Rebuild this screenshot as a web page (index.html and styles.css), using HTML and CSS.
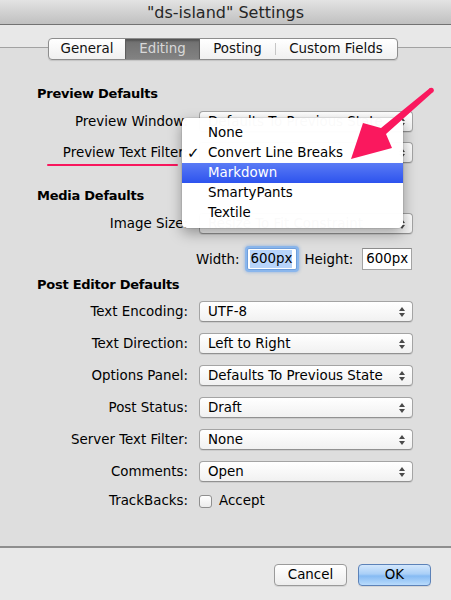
FILE: index.html
```html
<!DOCTYPE html>
<html>
<head>
<meta charset="utf-8">
<link rel="stylesheet" href="styles.css">
</head>
<body>
<div class="window">
  <header class="titlebar">"ds-island" Settings</header>
  <div class="toolbar"></div>
  <section class="tabbox">
    <nav class="tabs">
      <span class="tab">General</span>
      <span class="tab selected">Editing</span>
      <span class="tab">Posting</span>
      <span class="tab sep">Custom Fields</span>
    </nav>
    <div class="form">
      <h2 class="heading">Preview Defaults</h2>
      <div class="row mt9"><span class="label">Preview Window:</span><div class="popup"><span>Defaults To Previous State</span><svg class="updown" width="6" height="10" viewBox="0 0 6 10"><polygon points="0,4 3,0 6,4"/><polygon points="0,6 3,10 6,6"/></svg></div></div>
      <div class="row mt10"><span class="label">Preview Text Filter:</span><div class="popup"><span>Convert Line Breaks</span><svg class="updown" width="6" height="10" viewBox="0 0 6 10"><polygon points="0,4 3,0 6,4"/><polygon points="0,6 3,10 6,6"/></svg></div></div>

      <h2 class="heading mt25">Media Defaults</h2>
      <div class="row mt9"><span class="label">Image Size:</span><div class="popup"><span>Resize To Fit Constraint</span><svg class="updown" width="6" height="10" viewBox="0 0 6 10"><polygon points="0,4 3,0 6,4"/><polygon points="0,6 3,10 6,6"/></svg></div></div>
      <div class="size-row">
        <span class="size-label">Width:</span>
        <span class="field focus"><span class="sel">600px</span></span>
        <span class="size-label h">Height:</span>
        <span class="field">600px</span>
      </div>

      <h2 class="heading mt7">Post Editor Defaults</h2>
      <div class="row mt8"><span class="label">Text Encoding:</span><div class="popup"><span>UTF-8</span><svg class="updown" width="6" height="10" viewBox="0 0 6 10"><polygon points="0,4 3,0 6,4"/><polygon points="0,6 3,10 6,6"/></svg></div></div>
      <div class="row mt11"><span class="label">Text Direction:</span><div class="popup"><span>Left to Right</span><svg class="updown" width="6" height="10" viewBox="0 0 6 10"><polygon points="0,4 3,0 6,4"/><polygon points="0,6 3,10 6,6"/></svg></div></div>
      <div class="row mt11"><span class="label">Options Panel:</span><div class="popup"><span>Defaults To Previous State</span><svg class="updown" width="6" height="10" viewBox="0 0 6 10"><polygon points="0,4 3,0 6,4"/><polygon points="0,6 3,10 6,6"/></svg></div></div>
      <div class="row mt11"><span class="label">Post Status:</span><div class="popup"><span>Draft</span><svg class="updown" width="6" height="10" viewBox="0 0 6 10"><polygon points="0,4 3,0 6,4"/><polygon points="0,6 3,10 6,6"/></svg></div></div>
      <div class="row mt11"><span class="label">Server Text Filter:</span><div class="popup"><span>None</span><svg class="updown" width="6" height="10" viewBox="0 0 6 10"><polygon points="0,4 3,0 6,4"/><polygon points="0,6 3,10 6,6"/></svg></div></div>
      <div class="row mt11"><span class="label">Comments:</span><div class="popup"><span>Open</span><svg class="updown" width="6" height="10" viewBox="0 0 6 10"><polygon points="0,4 3,0 6,4"/><polygon points="0,6 3,10 6,6"/></svg></div></div>
      <div class="row check-row mt11"><span class="label">TrackBacks:</span><div class="check"><span class="box"></span><span>Accept</span></div></div>
    </div>
  </section>
  <footer class="buttons">
    <span class="btn">Cancel</span>
    <span class="btn default">OK</span>
  </footer>

  <div class="underline"></div>
  <ul class="menu">
    <li>None</li>
    <li class="checked"><span class="mark">✓</span>Convert Line Breaks</li>
    <li class="hl">Markdown</li>
    <li>SmartyPants</li>
    <li>Textile</li>
  </ul>
  <svg class="arrow" width="95" height="82" viewBox="345 82 95 82">
    <polygon points="351,159 392,148 386,134 432.5,92.5 430,88 381,128 363,123"/>
    <circle cx="431.3" cy="90.2" r="2.5"/>
  </svg>
</div>
</body>
</html>
```
FILE: styles.css
```css
html, body {
  margin: 0;
  padding: 0;
}
body {
  width: 451px;
  height: 600px;
  overflow: hidden;
  font-family: "DejaVu Sans", sans-serif;
  font-size: 13.4px;
  color: #000;
  background: #e8e8e8;
}
.window {
  position: relative;
  height: 600px;
  display: flex;
  flex-direction: column;
}
.titlebar {
  height: 23px;
  padding-top: 1px;
  line-height: 23px;
  text-align: center;
  font-size: 16px;
  color: #262626;
  background: linear-gradient(#e3e3e3, #c0c0c0);
  border-bottom: 1px solid #727272;
}
.toolbar {
  height: 22px;
  background: #e8e8e8;
}
.tabbox {
  flex: 1;
  background: #dedede;
  border-top: 1px solid #a2a2a2;
  border-bottom: 2px solid #8e8e8e;
}
.tabs {
  display: grid;
  grid-template-columns: 76px 75px 75px 122px;
  width: max-content;
  height: 22px;
  box-sizing: border-box;
  margin: -10px 0 0 48px;
  border: 1px solid #8d8d8d;
  border-radius: 4px;
  background: linear-gradient(#ffffff, #f0f0f0);
  box-shadow: 0 1px 1px rgba(0, 0, 0, 0.12);
  overflow: hidden;
}
.tab {
  position: relative;
  text-align: center;
  line-height: 20px;
  color: #111;
}
.tab.selected {
  background: linear-gradient(#6f6f6f, #828282);
  color: #d8d8d8;
  box-shadow: inset 1px 0 0 #5e5e5e, inset -1px 0 0 #5e5e5e, inset 0 2px 2px rgba(0,0,0,0.25);
}
.tab.sep::before {
  content: "";
  position: absolute;
  left: 0;
  top: 4px;
  bottom: 4px;
  width: 1px;
  background: #c6c6c6;
}
.form {
  padding-top: 26px;
  display: flex;
  flex-direction: column;
}
.heading {
  margin: 0 0 0 37px;
  font-size: 13px;
  font-weight: bold;
  letter-spacing: -0.25px;
  line-height: 16px;
}
.mt7 { margin-top: 7px; }
.mt8 { margin-top: 8px; }
.mt9 { margin-top: 9px; }
.mt10 { margin-top: 10px; }
.mt11 { margin-top: 11px; }
.mt25 { margin-top: 25px; }
.row {
  display: grid;
  grid-template-columns: 188px 214px;
  column-gap: 11px;
  align-items: center;
  height: 21px;
}
.label {
  text-align: right;
  line-height: 16px;
  white-space: nowrap;
}
.popup {
  height: 21px;
  box-sizing: border-box;
  border: 1px solid #a4a4a4;
  border-bottom-color: #919191;
  border-radius: 4px;
  background: linear-gradient(#ffffff, #f1f1f1);
  box-shadow: 0 1px 0 rgba(0, 0, 0, 0.08);
  display: flex;
  align-items: center;
  justify-content: space-between;
  padding: 0 7px 0 8px;
  line-height: 19px;
  white-space: nowrap;
}
.updown {
  fill: #4a4a4a;
  flex: none;
}
.size-row {
  display: flex;
  align-items: center;
  height: 22px;
  margin-top: 14px;
  padding-left: 196px;
}
.size-label {
  margin-right: 8px;
}
.size-label.h {
  margin-left: 7px;
  margin-right: 9px;
}
.field {
  width: 50px;
  height: 22px;
  box-sizing: border-box;
  border: 1px solid #a3a3a3;
  border-top-color: #8c8c8c;
  background: #fff;
  padding: 0 3px;
  line-height: 20px;
  white-space: nowrap;
}
.field.focus {
  border-color: #6f9fdc;
  border-radius: 2px;
  box-shadow: 0 0 0 2px #8ab6ec, 0 0 3px 3px rgba(110, 160, 225, 0.45);
  padding: 0 2px;
}
.sel {
  background: #b7d4fa;
  display: inline-block;
  line-height: 18px;
  margin-top: 1px;
}
.check-row {
  height: 16px;
}
.check {
  display: flex;
  align-items: center;
  gap: 7px;
  line-height: 16px;
}
.box {
  width: 13px;
  height: 13px;
  box-sizing: border-box;
  border: 1px solid #8f8f8f;
  border-radius: 3px;
  background: linear-gradient(#ffffff, #ececec);
}
.buttons {
  height: 52px;
  box-sizing: border-box;
  display: flex;
  justify-content: flex-end;
  align-items: flex-start;
  gap: 11px;
  padding: 16px 20px 0 0;
  background: #e8e8e8;
}
.btn {
  width: 73px;
  height: 22px;
  box-sizing: border-box;
  border: 1px solid #9a9a9a;
  border-radius: 4px;
  background: linear-gradient(#ffffff, #ededed);
  box-shadow: 0 1px 0 rgba(0, 0, 0, 0.08);
  text-align: center;
  line-height: 20px;
}
.btn.default {
  border-color: #5c82b8;
  background: linear-gradient(#d3e7fc 0%, #a9cff7 45%, #86bbf3 55%, #b9dbfc 100%);
}
.underline {
  position: absolute;
  left: 47px;
  top: 164px;
  width: 131px;
  height: 2px;
  border-radius: 1px;
  background: #f8175d;
}
.menu {
  position: absolute;
  left: 182px;
  top: 118px;
  width: 221px;
  margin: 0;
  padding: 5px 0;
  list-style: none;
  background: rgba(255, 255, 255, 0.98);
  border-radius: 5px;
  box-shadow: 0 5px 14px rgba(0, 0, 0, 0.35), 0 0 0 1px rgba(0, 0, 0, 0.07);
}
.menu li {
  position: relative;
  height: 20px;
  line-height: 20px;
  padding-left: 26px;
  color: #000;
}
.menu .mark {
  position: absolute;
  left: 5px;
  top: 0;
  font-size: 15px;
  font-weight: bold;
}
.menu li.hl {
  background: linear-gradient(#5a7bf5, #2d53ee);
  color: #fff;
}
.arrow {
  position: absolute;
  left: 345px;
  top: 82px;
  fill: #fa185e;
}
```
